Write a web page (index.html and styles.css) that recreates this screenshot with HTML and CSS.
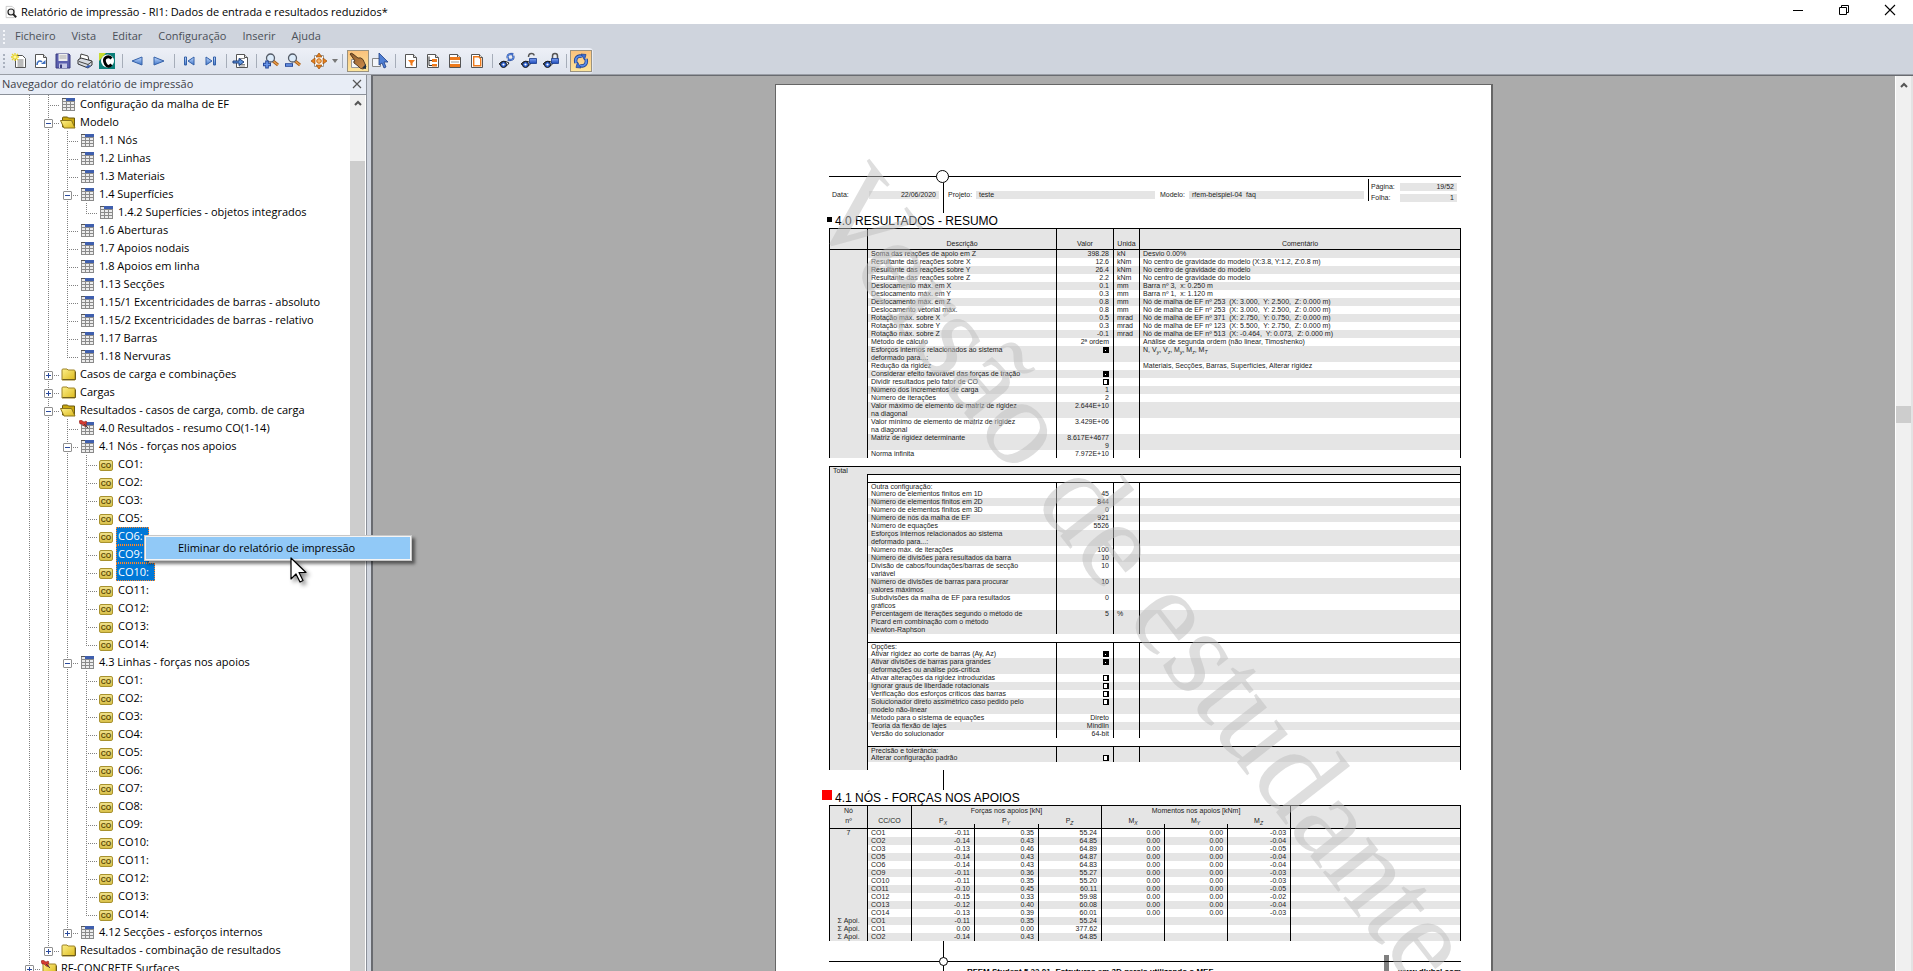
FILE: index.html
```html
<!DOCTYPE html>
<html lang="pt">
<head>
<meta charset="utf-8">
<title>Relatório de impressão</title>
<link rel="stylesheet" href="styles.css">
</head>
<body>
<svg class="defs" aria-hidden="true">
  <defs>
    <linearGradient id="gFolder" x1="0" y1="0" x2="1" y2="1"><stop offset="0" stop-color="#fdf08a"/><stop offset="1" stop-color="#dcb91c"/></linearGradient>
    <linearGradient id="gBlue" x1="0" y1="0" x2="0" y2="1"><stop offset="0" stop-color="#c4dcff"/><stop offset="1" stop-color="#3e74c8"/></linearGradient>
    <linearGradient id="gLock" x1="0" y1="0" x2="0" y2="1"><stop offset="0" stop-color="#7d9ff0"/><stop offset="1" stop-color="#1a48b8"/></linearGradient>
    <linearGradient id="gHand" x1="0" y1="0" x2="1" y2="1"><stop offset="0" stop-color="#8a5a2c"/><stop offset="1" stop-color="#d28f4c"/></linearGradient>
  </defs>
  <symbol id="sheet" viewBox="0 0 16 16"><path d="M2.500 1.500h8l3 3v10h-11z" fill="#fff" stroke="#555"/><path d="M10.500 1.500v3h3" fill="#ddd" stroke="#555"/></symbol>
  <symbol id="table" viewBox="0 0 16 16"><path d="M2 2h13v13H2z" fill="#8a8a8a"/><path d="M3 3h3v2H3zM3 6h3v2H3zM7 6h3v2H7zM11 6h3v2h-3zM3 9h3v2H3zM7 9h3v2H7zM11 9h3v2h-3zM3 12h3v2H3zM7 12h3v2H7zM11 12h3v2h-3z" fill="#ececec"/><path d="M6 2h9v3H6z" fill="#3f5fae"/><path d="M2 2h4v1H2z" fill="#555"/></symbol>
  <symbol id="folder" viewBox="0 0 16 16"><path d="M2 14V4q0-1 1-1h4l1 1h6q1 0 1 1v9z" fill="url(#gFolder)" stroke="#9c8226"/><path d="M2.500 13.500h13v-8" fill="none" stroke="#6f5e1c"/></symbol>
  <symbol id="folder-open" viewBox="0 0 16 16"><path d="M2.500 13V4q0-1 1-1h4l1 1h6v9z" fill="#c9a70f" stroke="#6a5810"/><path d="M.500 6.500h11l3.500 7.500H4z" fill="url(#gFolder)" stroke="#8a741c"/></symbol>
  <symbol id="pin" viewBox="0 0 16 16"><path d="M0 1l2-1 3 2 2-1 1 1-1 2 1 3-3-1-2-2-2 0z" fill="#d53a32" stroke="#7e1813" stroke-width=".5"/><path d="M5 4l4 4" stroke="#444"/></symbol>
  <symbol id="eye" viewBox="0 0 16 16"><path d="M0 11q4-5 10-1-3 6-10 1z" fill="#eef2fb" stroke="#222" stroke-width="1"/><circle cx="4.500" cy="11.500" r="3" fill="#2f62cf" stroke="#111"/><circle cx="4.500" cy="11.500" r="1.100" fill="#fff"/></symbol>
  <symbol id="cycle" viewBox="0 0 16 16"><path d="M3 10C1.500 5 5 2 9 3.500" fill="none" stroke="#1d3f8f" stroke-width="3.400"/><path d="M3 10C1.500 5 5 2 9 3.500" fill="none" stroke="#5b8de8" stroke-width="1.800"/><path d="M13 6c1.500 5-2 8-6 6.500" fill="none" stroke="#1d3f8f" stroke-width="3.400"/><path d="M13 6c1.500 5-2 8-6 6.500" fill="none" stroke="#5b8de8" stroke-width="1.800"/><path d="M8 1l5 .5L11.500 7zM8 15l-5-.5L4.500 9z" fill="#3b6fd6" stroke="#1d3f8f" stroke-width=".7"/></symbol>
  <symbol id="lens" viewBox="0 0 16 16"><path d="M10 8l5 4" stroke="#a85b18" stroke-width="3"/><path d="M10 8l5 4" stroke="#e8a04d" stroke-width="1.200"/><circle cx="7.500" cy="5" r="4" fill="#dcebfa" stroke="#555c68" stroke-width="1.300"/></symbol>
</svg>

<header class="titlebar">
  <svg class="app-icon" viewBox="0 0 16 16"><path d="M1.500.500h8l3 3v12h-11z" fill="#fff" stroke="#bbb"/><circle cx="8" cy="8" r="4" fill="#eee" stroke="#222" stroke-width="1.600"/><path d="M11 11l4 4" stroke="#222" stroke-width="2.400"/></svg>
  <h1>Relatório de impressão - RI1: Dados de entrada e resultados reduzidos*</h1>
  <div class="window-buttons">
    <button aria-label="Minimizar"><svg viewBox="0 0 10 10"><path d="M0 5.500h10" stroke="#000"/></svg></button>
    <button aria-label="Restaurar"><svg viewBox="0 0 10 10"><path d="M.500 2.500h7v7h-7zM2.500 2.500v-2h7v7h-2" fill="none" stroke="#000"/></svg></button>
    <button aria-label="Fechar"><svg viewBox="0 0 10 10"><path d="M0 0l10 10M10 0L0 10" stroke="#000" stroke-width="1.100"/></svg></button>
  </div>
</header>

<nav class="menubar">
  <button>Ficheiro</button><button>Vista</button><button>Editar</button><button>Configuração</button><button>Inserir</button><button>Ajuda</button>
</nav>

<div class="toolbar-row">
<div class="toolbar" role="toolbar">
  <button aria-label="Novo"><svg viewBox="0 0 16 16"><path d="M4.500 2.500h7l3 3v9h-10z" fill="#fff" stroke="#555"/><path d="M6.500 7h6M6.500 9h6M6.500 11h6M6.500 13h6" stroke="#777"/><path d="M4 0v8M0 4h8M1 1l6 6M7 1L1 7" stroke="#e8d428" stroke-width="1.300"/><circle cx="4" cy="4" r="1.600" fill="#fff7a0"/></svg></button>
  <button aria-label="Abrir"><svg viewBox="0 0 16 16"><use href="#sheet"/><path d="M4 12c0-4 3-5 5-3" fill="none" stroke="#3d6fc0" stroke-width="1.600"/><path d="M8 11h4.500V7z" fill="#3d6fc0"/></svg></button>
  <button aria-label="Guardar"><svg viewBox="0 0 16 16"><path d="M1 1h13l1 1v13H1z" fill="#5b5fae" stroke="#3a3d80"/><path d="M3.500 1h9v7h-9z" fill="#eee"/><path d="M4.500 3h7M4.500 5h7" stroke="#aaa"/><path d="M4 10.500h8V15H4z" fill="#c4c7e6"/><path d="M5 11.500h2V15H5z" fill="#3a3d80"/></svg></button>
  <button aria-label="Imprimir"><svg viewBox="0 0 16 16"><path d="M3 6l1-5 7 2 1 5z" fill="#fff" stroke="#444"/><path d="M1 7l3-2 11 3v4l-4 3-10-4z" fill="#d8dbe2" stroke="#333"/><path d="M2 8.500l9 3 4-3M11 11.500V15" fill="none" stroke="#444"/><path d="M8 14l4-2 2 1-3 2z" fill="#3c62b8"/></svg></button>
  <button aria-label="Ligação"><svg viewBox="0 0 16 16"><path d="M0 0h16v16H0z" fill="#0c7f7a"/><path d="M0 0h7L0 8z" fill="#c8dc30"/><circle cx="8.500" cy="8" r="6.500" fill="#fff"/><path d="M12.500 5.500Q10 2.500 7 4.500T6.500 11t6 .5" fill="none" stroke="#000" stroke-width="2.800"/></svg></button>
  <i class="sep"></i>
  <button aria-label="Anterior"><svg viewBox="0 0 16 16"><path d="M3 8l10-4v8z" fill="url(#gBlue)" stroke="#3561a8"/></svg></button>
  <button aria-label="Seguinte"><svg viewBox="0 0 16 16"><path d="M13 8L3 4v8z" fill="url(#gBlue)" stroke="#3561a8"/></svg></button>
  <i class="sep"></i>
  <button aria-label="Primeira"><svg viewBox="0 0 16 16"><path d="M3.500 4v8h2V4zM7 8l6-4v8z" fill="url(#gBlue)" stroke="#3561a8"/></svg></button>
  <button aria-label="Última"><svg viewBox="0 0 16 16"><path d="M12.500 4v8h-2V4zM9 8L3 4v8z" fill="url(#gBlue)" stroke="#3561a8"/></svg></button>
  <i class="sep"></i>
  <button aria-label="Ir para página"><svg viewBox="0 0 16 16"><use href="#sheet" x="1"/><path d="M6 5.500h6M6 11.500h6M6 13h6" stroke="#888"/><path d="M0 8h6V5.500L11 9l-5 3.500V10H0z" fill="#5d93dc" stroke="#1e3f7c"/></svg></button>
  <i class="sep"></i>
  <button aria-label="Ampliar"><svg viewBox="0 0 16 16"><use href="#lens"/><path d="M4 7.500v8M0 11.500h8" stroke="#24479a" stroke-width="3.600"/><path d="M4 8.500v6M1 11.500h6" stroke="#6c98ea" stroke-width="1.600"/></svg></button>
  <button aria-label="Reduzir"><svg viewBox="0 0 16 16"><use href="#lens"/><path d="M0 12h8" stroke="#24479a" stroke-width="3.600"/><path d="M1 12h6" stroke="#6c98ea" stroke-width="1.600"/></svg></button>
  <button class="split" aria-label="Mover"><svg viewBox="0 0 16 16"><path d="M3.500 2.500h9v11h-9z" fill="#fff" stroke="#999"/><path d="M8 0l3 4H5zM8 16l3-4H5zM0 8l4-3v6zM16 8l-4-3v6z" fill="#e8801c" stroke="#9a4d08" stroke-width=".7"/><circle cx="8" cy="8" r="2.300" fill="#f5b46c" stroke="#c86a12"/></svg><svg class="caret" viewBox="0 0 6 4"><path d="M0 0h6L3 4z" fill="#777"/></svg></button>
  <i class="sep wide"></i>
  <button class="on" aria-label="Mão"><svg viewBox="0 0 16 16"><path d="M1.500 6.500h8v8h-8z" fill="#f5f5f5" stroke="#999"/><path d="M0 1q1-1.500 3 0l5 4q3-1 5 1.500L15 11l1 3-3 2q-3 0-5-3L4 10q-1-2 1-2z" fill="url(#gHand)" stroke="#3a2410" stroke-width=".8"/><path d="M12 15l4-4v5z" fill="#234"/></svg></button>
  <button aria-label="Selecionar"><svg viewBox="0 0 16 16"><path d="M.500 5.500h8v8h-8z" fill="#f4f6fa" stroke="#888"/><path d="M7 0v12l3-2 2 5 2-1-2-5h4z" fill="#4f7fd4" stroke="#1f3f86" stroke-width=".8"/></svg></button>
  <i class="sep wide"></i>
  <button aria-label="Filtro"><svg viewBox="0 0 16 16"><use href="#sheet"/><path d="M5 7h7l-2.500 3v3l-2-1v-2z" fill="#ee7a1c"/></svg></button>
  <button aria-label="Índice"><svg viewBox="0 0 16 16"><use href="#sheet"/><path d="M4 3.500v9h3M4 7.500h3" fill="none" stroke="#333"/><path d="M7 6h5v3H7zM7 11h5v2.500H7z" fill="#ee7a1c"/></svg></button>
  <button aria-label="Cabeçalho"><svg viewBox="0 0 16 16"><use href="#sheet"/><path d="M3 4h10v3H3zM3 11h10v3H3z" fill="#ee7a1c"/><path d="M4 9h8" stroke="#999"/></svg></button>
  <button aria-label="Capa"><svg viewBox="0 0 16 16"><use href="#sheet"/><path d="M4.700 3.700h5l2 2v7h-7z" fill="#fff" stroke="#ee7a1c" stroke-width="1.400"/></svg></button>
  <i class="sep"></i>
  <button aria-label="Atualizar vista"><svg viewBox="0 0 16 16"><use href="#eye"/><use href="#cycle" x="7" y="-1" width="9" height="10"/></svg></button>
  <button aria-label="Desbloquear"><svg viewBox="0 0 16 16"><use href="#eye"/><path d="M7.500 4q0-3.500 3-3.500 2.500 0 2.500 2" fill="none" stroke="#555" stroke-width="1.500"/><path d="M8.500 5.500h7v5h-7z" fill="url(#gLock)" stroke="#163a8c" stroke-width=".8"/></svg></button>
  <button aria-label="Bloquear"><svg viewBox="0 0 16 16"><use href="#eye"/><path d="M9.500 6V3q0-2.500 2.500-2.500T14.500 3v3" fill="none" stroke="#555" stroke-width="1.500"/><path d="M8.500 5.500h7v5h-7z" fill="url(#gLock)" stroke="#163a8c" stroke-width=".8"/></svg></button>
  <i class="sep"></i>
  <button class="on" aria-label="Atualizar"><svg viewBox="0 0 16 16"><use href="#cycle"/></svg></button>
</div>
</div>

<div class="workspace">
<aside class="navigator">
  <div class="nav-head"><h2>Navegador do relatório de impressão</h2><button aria-label="Fechar painel"><svg viewBox="0 0 8 8"><path d="M0 0l8 8M8 0L0 8" stroke="#555" stroke-width="1.200"/></svg></button></div>
  <div class="nav-body">
  <ul class="tree">
    <li><ul>
      <li><div class="row"><svg class="ic"><use href="#table"/></svg><span>Configuração da malha de EF</span></div></li>
      <li><div class="row"><button class="exp minus" aria-label="Recolher"></button><svg class="ic"><use href="#folder-open"/></svg><span>Modelo</span></div>
        <ul>
          <li><div class="row"><svg class="ic"><use href="#table"/></svg><span>1.1 Nós</span></div></li>
          <li><div class="row"><svg class="ic"><use href="#table"/></svg><span>1.2 Linhas</span></div></li>
          <li><div class="row"><svg class="ic"><use href="#table"/></svg><span>1.3 Materiais</span></div></li>
          <li><div class="row"><button class="exp minus" aria-label="Recolher"></button><svg class="ic"><use href="#table"/></svg><span>1.4 Superfícies</span></div>
            <ul><li><div class="row"><svg class="ic"><use href="#table"/></svg><span>1.4.2 Superfícies - objetos integrados</span></div></li></ul></li>
          <li><div class="row"><svg class="ic"><use href="#table"/></svg><span>1.6 Aberturas</span></div></li>
          <li><div class="row"><svg class="ic"><use href="#table"/></svg><span>1.7 Apoios nodais</span></div></li>
          <li><div class="row"><svg class="ic"><use href="#table"/></svg><span>1.8 Apoios em linha</span></div></li>
          <li><div class="row"><svg class="ic"><use href="#table"/></svg><span>1.13 Secções</span></div></li>
          <li><div class="row"><svg class="ic"><use href="#table"/></svg><span>1.15/1 Excentricidades de barras - absoluto</span></div></li>
          <li><div class="row"><svg class="ic"><use href="#table"/></svg><span>1.15/2 Excentricidades de barras - relativo</span></div></li>
          <li><div class="row"><svg class="ic"><use href="#table"/></svg><span>1.17 Barras</span></div></li>
          <li><div class="row"><svg class="ic"><use href="#table"/></svg><span>1.18 Nervuras</span></div></li>
        </ul></li>
      <li><div class="row"><button class="exp" aria-label="Expandir"></button><svg class="ic"><use href="#folder"/></svg><span>Casos de carga e combinações</span></div></li>
      <li><div class="row"><button class="exp" aria-label="Expandir"></button><svg class="ic"><use href="#folder"/></svg><span>Cargas</span></div></li>
      <li><div class="row"><button class="exp minus" aria-label="Recolher"></button><svg class="ic"><use href="#folder-open"/></svg><span>Resultados - casos de carga, comb. de carga</span></div>
        <ul>
          <li><div class="row"><svg class="ic"><use href="#table"/><use href="#pin"/></svg><span>4.0 Resultados - resumo CO(1-14)</span></div></li>
          <li><div class="row"><button class="exp minus" aria-label="Recolher"></button><svg class="ic"><use href="#table"/></svg><span>4.1 Nós - forças nos apoios</span></div>
            <ul>
              <li><div class="row"><b class="co">CO</b><span>CO1:</span></div></li>
              <li><div class="row"><b class="co">CO</b><span>CO2:</span></div></li>
              <li><div class="row"><b class="co">CO</b><span>CO3:</span></div></li>
              <li><div class="row"><b class="co">CO</b><span>CO5:</span></div></li>
              <li><div class="row"><b class="co">CO</b><span class="sel">CO6:</span></div></li>
              <li><div class="row"><b class="co">CO</b><span class="sel">CO9:</span></div></li>
              <li><div class="row"><b class="co">CO</b><span class="sel">CO10:</span></div></li>
              <li><div class="row"><b class="co">CO</b><span>CO11:</span></div></li>
              <li><div class="row"><b class="co">CO</b><span>CO12:</span></div></li>
              <li><div class="row"><b class="co">CO</b><span>CO13:</span></div></li>
              <li><div class="row"><b class="co">CO</b><span>CO14:</span></div></li>
            </ul></li>
          <li><div class="row"><button class="exp minus" aria-label="Recolher"></button><svg class="ic"><use href="#table"/></svg><span>4.3 Linhas - forças nos apoios</span></div>
            <ul>
              <li><div class="row"><b class="co">CO</b><span>CO1:</span></div></li>
              <li><div class="row"><b class="co">CO</b><span>CO2:</span></div></li>
              <li><div class="row"><b class="co">CO</b><span>CO3:</span></div></li>
              <li><div class="row"><b class="co">CO</b><span>CO4:</span></div></li>
              <li><div class="row"><b class="co">CO</b><span>CO5:</span></div></li>
              <li><div class="row"><b class="co">CO</b><span>CO6:</span></div></li>
              <li><div class="row"><b class="co">CO</b><span>CO7:</span></div></li>
              <li><div class="row"><b class="co">CO</b><span>CO8:</span></div></li>
              <li><div class="row"><b class="co">CO</b><span>CO9:</span></div></li>
              <li><div class="row"><b class="co">CO</b><span>CO10:</span></div></li>
              <li><div class="row"><b class="co">CO</b><span>CO11:</span></div></li>
              <li><div class="row"><b class="co">CO</b><span>CO12:</span></div></li>
              <li><div class="row"><b class="co">CO</b><span>CO13:</span></div></li>
              <li><div class="row"><b class="co">CO</b><span>CO14:</span></div></li>
            </ul></li>
          <li><div class="row"><button class="exp" aria-label="Expandir"></button><svg class="ic"><use href="#table"/></svg><span>4.12 Secções - esforços internos</span></div></li>
        </ul></li>
      <li><div class="row"><button class="exp" aria-label="Expandir"></button><svg class="ic"><use href="#folder"/></svg><span>Resultados - combinação de resultados</span></div></li>
    </ul></li>
    <li><div class="row"><button class="exp" aria-label="Expandir"></button><svg class="ic"><use href="#folder"/><use href="#pin"/></svg><span>RF-CONCRETE Surfaces</span></div></li>
  </ul>
  <div class="scrollbar nav-scroll"><svg viewBox="0 0 8 6"><path d="M1 5l3-3 3 3" fill="none" stroke="#555" stroke-width="2"/></svg><i></i></div>
  </div>
</aside>

<main class="viewer">
  <div class="canvas">
  <article class="paper">
    <div class="rule"><i class="ring"></i></div>
    <div class="paper-head">
      <span class="lab">Data:</span><span class="fld num">22/06/2020</span>
      <span class="lab projeto">Projeto:</span><span class="fld">teste</span>
      <span class="lab modelo">Modelo:</span><span class="fld">rfem-beispiel-04&nbsp; faq</span>
      <div class="pages"><span>Página:</span><span class="fld num">19/52</span><span>Folha:</span><span class="fld num">1</span></div>
    </div>

    <h2 class="section"><i></i>4.0 RESULTADOS - RESUMO</h2>
    <table class="sum">
      <colgroup><col class="c-side"><col class="c-desc"><col class="c-val"><col class="c-unit"><col></colgroup>
      <thead><tr><th></th><th>Descrição</th><th>Valor</th><th>Unida</th><th>Comentário</th></tr></thead>
      <tbody>
      <tr><td></td><td>Soma das reações de apoio em Z</td><td>398.28</td><td>kN</td><td>Desvio 0.00%</td></tr>
      <tr><td></td><td>Resultante das reações sobre X</td><td>12.6</td><td>kNm</td><td>No centro de gravidade do modelo (X:3.8, Y:1.2, Z:0.8 m)</td></tr>
      <tr><td></td><td>Resultante das reações sobre Y</td><td>26.4</td><td>kNm</td><td>No centro de gravidade do modelo</td></tr>
      <tr><td></td><td>Resultante das reações sobre Z</td><td>2.2</td><td>kNm</td><td>No centro de gravidade do modelo</td></tr>
      <tr><td></td><td>Deslocamento máx. em X</td><td>0.1</td><td>mm</td><td>Barra nº 3,&nbsp; x: 0.250 m</td></tr>
      <tr><td></td><td>Deslocamento máx. em Y</td><td>0.3</td><td>mm</td><td>Barra nº 1,&nbsp; x: 1.120 m</td></tr>
      <tr><td></td><td>Deslocamento máx. em Z</td><td>0.8</td><td>mm</td><td>Nó de malha de EF nº 253&nbsp; (X: 3.000,&nbsp; Y: 2.500,&nbsp; Z: 0.000 m)</td></tr>
      <tr><td></td><td>Deslocamento vetorial máx.</td><td>0.8</td><td>mm</td><td>Nó de malha de EF nº 253&nbsp; (X: 3.000,&nbsp; Y: 2.500,&nbsp; Z: 0.000 m)</td></tr>
      <tr><td></td><td>Rotação máx. sobre X</td><td>0.5</td><td>mrad</td><td>Nó de malha de EF nº 371&nbsp; (X: 2.750,&nbsp; Y: 0.750,&nbsp; Z: 0.000 m)</td></tr>
      <tr><td></td><td>Rotação máx. sobre Y</td><td>0.3</td><td>mrad</td><td>Nó de malha de EF nº 123&nbsp; (X: 5.500,&nbsp; Y: 2.750,&nbsp; Z: 0.000 m)</td></tr>
      <tr><td></td><td>Rotação máx. sobre Z</td><td>-0.1</td><td>mrad</td><td>Nó de malha de EF nº 513&nbsp; (X: -0.464,&nbsp; Y: 0.073,&nbsp; Z: 0.000 m)</td></tr>
      <tr><td></td><td>Método de cálculo</td><td>2ª ordem</td><td></td><td>Análise de segunda ordem (não linear, Timoshenko)</td></tr>
      <tr><td></td><td><label for="k1">Esforços internos relacionados ao sistema<br>deformado para...:</label></td><td><input id="k1" type="checkbox" checked></td><td></td><td>N, V<sub>y</sub>, V<sub>z</sub>, M<sub>y</sub>, M<sub>z</sub>, M<sub>T</sub></td></tr>
      <tr><td></td><td>Redução da rigidez</td><td></td><td></td><td>Materiais, Secções, Barras, Superfícies, Alterar rigidez</td></tr>
      <tr><td></td><td><label for="k2">Considerar efeito favorável das forças de tração</label></td><td><input id="k2" type="checkbox" checked></td><td></td><td></td></tr>
      <tr><td></td><td><label for="k3">Dividir resultados pelo fator de CO</label></td><td><input id="k3" type="checkbox"></td><td></td><td></td></tr>
      <tr><td></td><td>Número dos incrementos de carga</td><td>1</td><td></td><td></td></tr>
      <tr><td></td><td>Número de iterações</td><td>2</td><td></td><td></td></tr>
      <tr><td></td><td>Valor máximo de elemento de matriz de rigidez<br>na diagonal</td><td>2.644E+10</td><td></td><td></td></tr>
      <tr><td></td><td>Valor mínimo de elemento de matriz de rigidez<br>na diagonal</td><td>3.429E+06</td><td></td><td></td></tr>
      <tr><td></td><td>Matriz de rigidez determinante</td><td>8.617E+4677<br>9</td><td></td><td></td></tr>
      <tr><td></td><td>Norma infinita</td><td>7.972E+10</td><td></td><td></td></tr>
      </tbody>
    </table>

    <table class="sum total">
      <colgroup><col class="c-side"><col class="c-desc"><col class="c-val"><col class="c-unit"><col></colgroup>
      <thead><tr><th colspan="5">Total</th></tr></thead>
      <tbody>
      <tr class="gap line"><td></td><td colspan="4"></td></tr>
      </tbody>
      <tbody class="group">
      <tr class="line"><td></td><td>Outra configuração:</td><td></td><td></td><td></td></tr>
      <tr><td></td><td>Número de elementos finitos em 1D</td><td>45</td><td></td><td></td></tr>
      <tr><td></td><td>Número de elementos finitos em 2D</td><td>844</td><td></td><td></td></tr>
      <tr><td></td><td>Número de elementos finitos em 3D</td><td>0</td><td></td><td></td></tr>
      <tr><td></td><td>Número de nós da malha de EF</td><td>921</td><td></td><td></td></tr>
      <tr><td></td><td>Número de equações</td><td>5526</td><td></td><td></td></tr>
      <tr><td></td><td>Esforços internos relacionados ao sistema<br>deformado para...:</td><td></td><td></td><td></td></tr>
      <tr><td></td><td>Número máx. de iterações</td><td>100</td><td></td><td></td></tr>
      <tr><td></td><td>Número de divisões para resultados da barra</td><td>10</td><td></td><td></td></tr>
      <tr><td></td><td>Divisão de cabos/foundações/barras de secção<br>variável</td><td>10</td><td></td><td></td></tr>
      <tr><td></td><td>Número de divisões de barras para procurar<br>valores máximos</td><td>10</td><td></td><td></td></tr>
      <tr><td></td><td>Subdivisões da malha de EF para resultados<br>gráficos</td><td>0</td><td></td><td></td></tr>
      <tr><td></td><td>Percentagem de iterações segundo o método de<br>Picard em combinação com o método<br>Newton-Raphson</td><td>5</td><td>%</td><td></td></tr>
      </tbody>
      <tbody>
      <tr class="gap"><td></td><td colspan="4"></td></tr>
      </tbody>
      <tbody class="group">
      <tr class="line"><td></td><td>Opções:</td><td></td><td></td><td></td></tr>
      <tr><td></td><td><label for="k4">Ativar rigidez ao corte de barras (Ay, Az)</label></td><td><input id="k4" type="checkbox" checked></td><td></td><td></td></tr>
      <tr><td></td><td><label for="k5">Ativar divisões de barras para grandes<br>deformações ou análise pós-crítica</label></td><td><input id="k5" type="checkbox" checked></td><td></td><td></td></tr>
      <tr><td></td><td><label for="k6">Ativar alterações da rigidez introduzidas</label></td><td><input id="k6" type="checkbox"></td><td></td><td></td></tr>
      <tr><td></td><td><label for="k7">Ignorar graus de liberdade rotacionais</label></td><td><input id="k7" type="checkbox"></td><td></td><td></td></tr>
      <tr><td></td><td><label for="k8">Verificação dos esforços críticos das barras</label></td><td><input id="k8" type="checkbox"></td><td></td><td></td></tr>
      <tr><td></td><td><label for="k9">Solucionador direto assimétrico caso pedido pelo<br>modelo não-linear</label></td><td><input id="k9" type="checkbox"></td><td></td><td></td></tr>
      <tr><td></td><td>Método para o sistema de equações</td><td>Direto</td><td></td><td></td></tr>
      <tr><td></td><td>Teoria da flexão de lajes</td><td>Mindlin</td><td></td><td></td></tr>
      <tr><td></td><td>Versão do solucionador</td><td>64-bit</td><td></td><td></td></tr>
      </tbody>
      <tbody>
      <tr class="gap"><td></td><td colspan="4"></td></tr>
      </tbody>
      <tbody class="group shaded">
      <tr class="line"><td></td><td>Precisão e tolerância:</td><td></td><td></td><td></td></tr>
      <tr><td></td><td><label for="k10">Alterar configuração padrão</label></td><td><input id="k10" type="checkbox"></td><td></td><td></td></tr>
      </tbody>
      <tbody>
      <tr class="gap"><td></td><td colspan="4"></td></tr>
      </tbody>
    </table>

    <div class="stem"></div>
    <h2 class="section current"><i></i>4.1 NÓS - FORÇAS NOS APOIOS</h2>
    <table class="forces">
      <colgroup><col class="c-side"><col class="c-co"><col class="c-f"><col class="c-f2"><col class="c-f"><col class="c-f"><col class="c-f"><col class="c-f"><col></colgroup>
      <thead>
      <tr><th>Nó</th><th></th><th colspan="3">Forças nos apoios [kN]</th><th colspan="3">Momentos nos apoios [kNm]</th><th></th></tr>
      <tr><th>nº</th><th>CC/CO</th><th>P<sub>X</sub></th><th class="tick">P<sub>Y</sub></th><th class="tick">P<sub>Z</sub></th><th>M<sub>X</sub></th><th class="tick">M<sub>Y</sub></th><th class="tick">M<sub>Z</sub></th><th></th></tr>
      </thead>
      <tbody>
      <tr><td>7</td><td>CO1</td><td>-0.11</td><td>0.35</td><td>55.24</td><td>0.00</td><td>0.00</td><td>-0.03</td><td></td></tr>
      <tr><td></td><td>CO2</td><td>-0.14</td><td>0.43</td><td>64.85</td><td>0.00</td><td>0.00</td><td>-0.04</td><td></td></tr>
      <tr><td></td><td>CO3</td><td>-0.13</td><td>0.46</td><td>64.89</td><td>0.00</td><td>0.00</td><td>-0.05</td><td></td></tr>
      <tr><td></td><td>CO5</td><td>-0.14</td><td>0.43</td><td>64.87</td><td>0.00</td><td>0.00</td><td>-0.04</td><td></td></tr>
      <tr><td></td><td>CO6</td><td>-0.14</td><td>0.43</td><td>64.83</td><td>0.00</td><td>0.00</td><td>-0.04</td><td></td></tr>
      <tr><td></td><td>CO9</td><td>-0.11</td><td>0.36</td><td>55.27</td><td>0.00</td><td>0.00</td><td>-0.03</td><td></td></tr>
      <tr><td></td><td>CO10</td><td>-0.11</td><td>0.35</td><td>55.20</td><td>0.00</td><td>0.00</td><td>-0.03</td><td></td></tr>
      <tr><td></td><td>CO11</td><td>-0.10</td><td>0.45</td><td>60.11</td><td>0.00</td><td>0.00</td><td>-0.05</td><td></td></tr>
      <tr><td></td><td>CO12</td><td>-0.15</td><td>0.33</td><td>59.98</td><td>0.00</td><td>0.00</td><td>-0.02</td><td></td></tr>
      <tr><td></td><td>CO13</td><td>-0.12</td><td>0.40</td><td>60.08</td><td>0.00</td><td>0.00</td><td>-0.04</td><td></td></tr>
      <tr><td></td><td>CO14</td><td>-0.13</td><td>0.39</td><td>60.01</td><td>0.00</td><td>0.00</td><td>-0.03</td><td></td></tr>
      <tr><td>Σ Apoi.</td><td>CO1</td><td>-0.11</td><td>0.35</td><td>55.24</td><td></td><td></td><td></td><td></td></tr>
      <tr><td>Σ Apoi.</td><td>CO1</td><td>0.00</td><td>0.00</td><td>377.62</td><td></td><td></td><td></td><td></td></tr>
      <tr><td>Σ Apoi.</td><td>CO2</td><td>-0.14</td><td>0.43</td><td>64.85</td><td></td><td></td><td></td><td></td></tr>
      </tbody>
    </table>

    <footer class="paper-foot">
      <div class="rule"><i class="ring"></i></div>
      <p><span>RFEM Student 5.22.01 -Estruturas em 3D gerais utilizando o MEF</span><a href="#">www.dlubal.com</a></p>
    </footer>
    <svg class="watermark"><text transform="translate(28 123) rotate(52)">Versão de estudante</text></svg>
  </article>
  </div>
  <div class="scrollbar view-scroll"><svg viewBox="0 0 8 6"><path d="M1 5l3-3 3 3" fill="none" stroke="#555" stroke-width="2"/></svg><i></i></div>
</main>
</div>

<div class="context-menu" role="menu"><button role="menuitem">Eliminar do relatório de impressão</button></div>
<svg class="pointer" viewBox="0 0 18 27"><path d="M1 1v21l5-5 4 8 3-1.500-4-8h7z" fill="#fff" stroke="#000" stroke-width="1.200" stroke-linejoin="round"/></svg>
</body>
</html>
```

FILE: styles.css
```css
* { box-sizing: border-box; }
body {
  margin: 0;
  height: 100vh;
  display: flex;
  flex-direction: column;
  overflow: hidden;
  background: #cfd4dd;
  color: #000;
  font: 11px/18px "Open Sans", "Noto Sans", sans-serif;
}
button { margin: 0; padding: 0; border: 0; background: none; font: inherit; color: inherit; }
h1, h2, p, ul { margin: 0; padding: 0; font-size: inherit; font-weight: normal; }
ul { list-style: none; }
svg { display: block; overflow: visible; }
.defs { position: absolute; width: 0; height: 0; }

/* Window chrome */
.titlebar { display: flex; align-items: center; height: 24px; padding-left: 5px; background: #fff; flex: none; }
.app-icon { width: 12px; height: 14px; margin-right: 4px; }
.titlebar h1 { flex: 1; white-space: nowrap; }
.window-buttons { display: flex; padding-bottom: 4px; }
.window-buttons button { width: 46px; height: 20px; display: grid; place-items: center; }
.window-buttons svg { width: 10px; height: 10px; }
.menubar {
  display: flex; gap: 16px; align-items: center; flex: none;
  height: 24px; padding-left: 15px; color: #4b5058;
  background: repeating-linear-gradient(#f4f6fa 0 2px, transparent 2px 4px) 3px 6px / 2px 14px no-repeat;
}
.toolbar-row { flex: none; height: 27px; border-bottom: 1px solid #9a9ea6; display: flex; }
.toolbar {
  display: flex; align-items: center; height: 26px; padding-left: 8px; padding-right: 1px;
  border-radius: 0 4px 4px 0;
  background:
    repeating-linear-gradient(#aab1be 0 2px, transparent 2px 4px) 3px 6px / 2px 14px no-repeat,
    linear-gradient(#edf0f7, #dde2ec);
}
.toolbar button { width: 22px; height: 22px; display: flex; align-items: center; justify-content: center; }
.toolbar svg { width: 16px; height: 16px; }
.toolbar .on { border: 1px solid #9a9280; background: linear-gradient(#fbc27c, #fde59c); }
.toolbar .split { width: 34px; gap: 5px; justify-content: flex-end; }
.toolbar .caret { width: 6px; height: 4px; }
.sep { width: 8px; height: 14px; background: linear-gradient(#a6adb9, #a6adb9) 4px 0 / 1px 100% no-repeat; }
.wide { width: 9px; }

.workspace { flex: 1; min-height: 0; display: flex; }

/* Navigator */
.navigator { width: 367px; flex: none; display: flex; flex-direction: column; border-right: 1px solid #8b9099; background: #fff; }
.nav-head {
  display: flex; justify-content: space-between; align-items: center; flex: none;
  height: 20px; padding: 0 5px 2px 2px; border-bottom: 1px solid #8b9099;
  background: #e8edf6; color: #3c4046;
}
.nav-head svg { width: 8px; height: 8px; }
.nav-body { flex: 1; min-height: 0; display: flex; overflow: hidden; }
.tree { flex: 1; padding-left: 19px; white-space: nowrap; }
.tree ul { padding-left: 19px; }
.tree li { background: repeating-linear-gradient(#808080 0 1px, transparent 1px 2px) 10px 0 / 1px 100% no-repeat; }
.tree li:last-child { background-size: 1px 10px; }
.row {
  height: 18px; display: grid; grid-template-columns: 22px 16px auto; justify-content: start; align-items: center;
  background: repeating-linear-gradient(90deg, #808080 0 1px, transparent 1px 2px) 10px 10px / 12px 1px no-repeat;
}
.exp {
  width: 9px; height: 9px; margin: 3px 0 0 6px; border: 1px solid #8f8f8f; border-radius: 1px;
  background:
    linear-gradient(#2a4a9c, #2a4a9c) center / 5px 1px no-repeat,
    linear-gradient(#2a4a9c, #2a4a9c) center / 1px 5px no-repeat, #fff;
}
.exp.minus { background: linear-gradient(#2a4a9c, #2a4a9c) center / 5px 1px no-repeat, #fff; }
.ic, .co { grid-column: 2; }
.ic { width: 16px; height: 16px; }
.row span { grid-column: 3; margin-left: 2px; padding: 0 6px 0 2px; }
.co {
  width: 14px; height: 11px; margin: 2px 0 0 1px; border: 1px solid #a8922e; border-radius: 2px;
  background: linear-gradient(#efe08a, #d9c04a); color: #5c4a08;
  font: bold 7px/9px "Liberation Sans", Arial, sans-serif; text-align: center;
}
.row .sel { background: #0078d7; color: #fff; outline: 1px dotted #ff8728; outline-offset: -1px; }

.scrollbar { flex: none; background: #f0f0f0; display: flex; flex-direction: column; align-items: center; }
.scrollbar svg { width: 8px; height: 6px; flex: none; }
.scrollbar i { align-self: stretch; background: #cdcdcd; }
.nav-scroll { width: 15px; margin-right: 1px; padding-top: 5px; }
.nav-scroll i { margin-top: 55px; flex: 1; }

/* Report viewer */
.viewer { flex: 1; min-width: 0; display: flex; margin-left: 4px; border-left: 2px solid #696b70; border-top: 1px solid #696b70; background: #ababab; overflow: hidden; }
.canvas { flex: 1; padding-top: 8px; }
.view-scroll { width: 18px; padding-top: 6px; border-left: 1px solid #fff; border-right: 2px solid #e3e3e3; }
.view-scroll i { margin-top: 318px; height: 17px; }
.paper {
  position: relative; width: 718px; height: 1000px; margin: 0 auto; padding: 85px 30px 0 53px;
  border: 1px solid #666; border-right-width: 2px; background: #fff; color: #222;
  font: 7px/8px "Liberation Sans", Arial, sans-serif;
}
.rule { height: 13px; padding-left: 107px; background: linear-gradient(#000, #000) 0 6px / 100% 1px no-repeat; }
.ring { display: block; width: 13px; height: 13px; border: 1px solid #000; border-radius: 50%; background: #fff; }
.paper-head {
  display: grid; grid-template-columns: 40px 70px 37px 179px 34px 1fr 97px; align-items: start;
  height: 34px; margin-top: -4px; background: linear-gradient(#000, #000) 114px 4px / 1px 30px no-repeat;
}
.paper-head > span { margin-top: 12px; }
.lab { padding-left: 3px; }
.projeto { padding-left: 9px; }
.modelo { padding-left: 5px; }
.fld { background: #e5e5e5; padding: 0 3px; }
.num { text-align: right; }
.pages { display: grid; grid-template-columns: 29px 57px; row-gap: 3px; height: 22px; margin-left: 4px; padding: 4px 0 0 2px; border-left: 1px solid #000; }

.section { display: flex; gap: 3px; height: 15px; margin-left: -7px; font-size: 12px; line-height: 16px; color: #000; }
.section i { width: 5px; height: 5px; margin: 4px 0 0 5px; background: #000; }
.section.current i { width: 10px; height: 10px; margin: 0; background: #f00; }

table { width: 100%; table-layout: fixed; border-spacing: 0; border-top: 1px solid #000; border-right: 1px solid #000; }
td, th { height: 8px; padding: 0 0 0 3px; border-left: 1px solid #000; text-align: left; vertical-align: top; font-weight: normal; white-space: nowrap; }
th { background: #e5e5e5; }
sub { font-size: 5px; line-height: 0; vertical-align: -2px; font-style: italic; }
.c-side { width: 38px; }
.c-desc { width: 189px; }
.c-val { width: 57px; }
.c-unit { width: 26px; }
.c-co { width: 44px; }
.c-f { width: 63px; }
.c-f2 { width: 64px; }

.sum thead th { height: 21px; padding: 0 0 1px; border-bottom: 1px solid #000; text-align: center; vertical-align: bottom; }
.sum tbody td:nth-child(3) { text-align: right; padding-right: 4px; }
.sum tbody tr:nth-child(odd) td, tbody td:first-child { background: #e5e5e5; }
.total { margin-top: 8px; }
.total thead th { height: 7px; padding: 0 3px; border-bottom: 0; text-align: left; line-height: 7px; }
.total tbody tr td:nth-child(n+2) { background: #fff; }
.total .group tr:nth-child(odd):not(:first-child) td,
.total .shaded tr td:nth-child(n+2) { background: #e5e5e5; }
.total .line td:nth-child(n+2) { border-top: 1px solid #000; line-height: 7px; }
input {
  appearance: none; display: block; width: 6px; height: 6px; margin: 1px 0 0 auto;
  border: 1px solid #000; border-right-width: 2px; background: #fff;
}
input:checked { background: linear-gradient(#fff, #fff) 1px 2px / 1px 1px no-repeat, #000; }

.stem { height: 20px; background: linear-gradient(#000, #000) 114px 0 / 1px 100% no-repeat; }

.forces th { height: 10px; line-height: 10px; padding: 0; text-align: center; }
.forces thead tr:last-child th { height: 13px; border-bottom: 1px solid #000; }
.forces thead .tick { border-left: 0; background: linear-gradient(#000, #000) 0 8px / 1px 4px no-repeat, #e5e5e5; }
.forces td:nth-child(n+3) { text-align: right; padding-right: 4px; }
.forces td:first-child { text-align: center; padding: 0; }
.forces tbody tr:nth-child(even) td { background: #e5e5e5; }

.paper-foot {
  padding-top: 14px;
  background:
    linear-gradient(#808080, #808080) 555px 14px / 5px 100% no-repeat,
    linear-gradient(#000, #000) 114px 0 / 1px 100% no-repeat;
}
.paper-foot .ring { width: 9px; height: 9px; margin: 2px 0 0 3px; }
.paper-foot .rule { display: flow-root; }
.paper-foot p { display: flex; justify-content: space-between; padding-left: 138px; height: 40px; color: #000; font-size: 8px; font-weight: bold; }
.paper-foot a { color: inherit; text-decoration: none; }
.watermark { position: absolute; inset: 0; width: 100%; height: 100%; pointer-events: none; }
.watermark text { font-family: "Liberation Serif", "Times New Roman", serif; font-size: 125px; fill: #bebebe; fill-opacity: .5; }

/* Floating menu and mouse pointer */
.context-menu {
  position: absolute; left: 144px; top: 535px; width: 268px; padding: 1px;
  border: 1px solid #c8c8c8; background: #f4f4f4; box-shadow: 3px 3px 3px rgba(0, 0, 0, .5);
}
.context-menu button { display: block; width: 100%; height: 22px; padding-left: 32px; text-align: left; background: #91c9f7; }
.pointer { position: absolute; left: 290px; top: 557px; width: 18px; height: 27px; filter: drop-shadow(3px 3px 2px rgba(0, 0, 0, .45)); }
```
